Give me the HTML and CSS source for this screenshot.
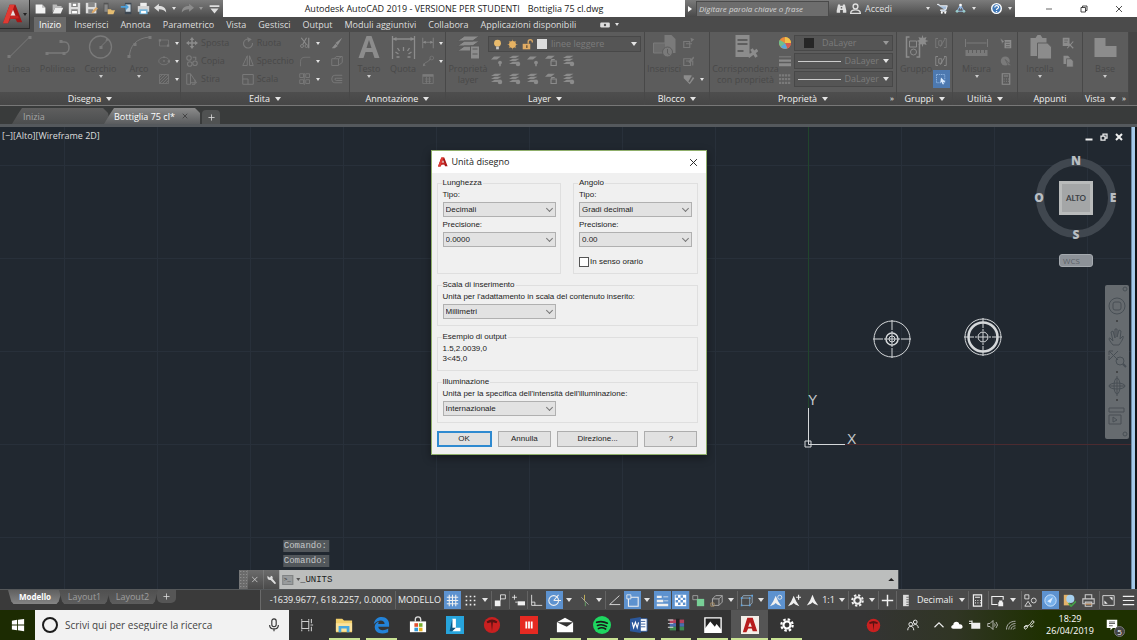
FILE: index.html
```
<!DOCTYPE html>
<html lang="it">
<head>
  <meta charset="UTF-8" />
  <meta name="viewport" content="width=device-width, initial-scale=1.0"/>
  <title>Autodesk AutoCAD 2019</title>
  <link rel="stylesheet" href="styles.css">
</head>
<body>
  <svg class="sprite" aria-hidden="true">
    <!-- quick access -->
    <symbol id="new" viewBox="0 0 16 16"><path d="M2 3h8l4 4v7H2z" fill="#f4f4f4"/><path d="M10 3v4h4" fill="#bbb"/></symbol>
    <symbol id="open" viewBox="0 0 16 16"><path d="M2 13V3h5l1 2h5v2H5z" fill="#bbb"/><path d="M5 7h10l-3 7H2z" fill="#eee"/></symbol>
    <symbol id="save" viewBox="0 0 16 16"><path d="M1 1h14v14H1z" fill="#ddd"/><path d="M4 1h8v5H4zM4 9h8v6H4z" fill="#888"/><path d="M6 2h4v3H6zM5 11h6v3H5z" fill="#fff"/></symbol>
    <symbol id="saveas" viewBox="0 0 16 16"><path d="M1 1h13v13H1z" fill="#ddd"/><path d="M4 1h8v5H4zM4 9h6v5H4z" fill="#888"/><path d="M8 14l1-3 5-5 2 2-5 5z" fill="#dca866"/></symbol>
    <symbol id="openmob" viewBox="0 0 16 16"><path d="M2 1h6v13H2z" fill="#555"/><path d="M3 3h4v9H3z" fill="#888"/><path d="M7 9h4l1 1h4l-2 5H7z" fill="#e5bd72"/></symbol>
    <symbol id="savemob" viewBox="0 0 16 16"><path d="M6 1h8v14H6z" fill="#3c4650"/><path d="M7 3h6v9H7z" fill="#c8d6e0"/><path d="M1 5h6V2l4 4-4 4V7H1z" fill="#4ba0dc"/></symbol>
    <symbol id="print" viewBox="0 0 16 16"><path d="M4 1h8v5H4z" fill="#eee"/><path d="M1 5h14v7H1z" fill="#d5d5d5"/><path d="M3 9h10v6H3z" fill="#70b4dc"/><path d="M5 11h6v3H5z" fill="#fff"/></symbol>
    <symbol id="undo" viewBox="0 0 16 16"><path d="M0 7l6-5v3c5 0 9 2 9 8-2-3-5-4-9-4v3z" fill="currentColor"/></symbol>
    <symbol id="redo" viewBox="0 0 16 16"><path d="M16 7l-6-5v3c-5 0-9 2-9 8 2-3 5-4 9-4v3z" fill="currentColor"/></symbol>
    <symbol id="custom" viewBox="0 0 16 16"><path d="M2 4h12v2H2zM3 8h10l-5 6z" fill="currentColor"/></symbol>
    <symbol id="binoc" viewBox="0 0 16 16"><path d="M3 2h3v2h4V2h3l2 9v3h-5v-4H6v4H1v-3z" fill="currentColor"/><path d="M7 6h2v2H7z" fill="#555"/></symbol>
    <symbol id="user" viewBox="0 0 16 16"><g fill="none" stroke="currentColor" stroke-width="2"><circle cx="8" cy="5" r="3.5"/><path d="M1 15c0-4 3-5 7-5s7 1 7 5z"/></g></symbol>
    <symbol id="cart" viewBox="0 0 16 16"><path d="M0 2h3l1 2h11l-2 6H5l1 2h8" fill="#a8c0dc" stroke="#fff" stroke-width="1.2"/><circle cx="7" cy="14" r="1.5" fill="#fff"/><circle cx="12" cy="14" r="1.5" fill="#fff"/></symbol>
    <symbol id="a360" viewBox="0 0 16 16"><path d="M8 3L3 12h10zM8 3v6" fill="none" stroke="#8fb4e0" stroke-width="1.5"/><circle cx="8" cy="3" r="2" fill="#fff"/><circle cx="3" cy="12" r="2" fill="#9cc"/><circle cx="13" cy="12" r="2" fill="#9cc"/></symbol>
    <symbol id="help" viewBox="0 0 16 16"><circle cx="8" cy="8" r="7" fill="#3f78b8" stroke="#fff" stroke-width="2"/><path d="M5.500 6.500C5.500 3 11 3 11 6c0 2-3 2-3 4M8 11.500V13" fill="none" stroke="#fff" stroke-width="1.800"/></symbol>
    <symbol id="min" viewBox="0 0 16 16"><path d="M2 8h12" stroke="currentColor" stroke-width="1.500"/></symbol>
    <symbol id="restore" viewBox="0 0 16 16"><path d="M2 5h9v9H2zM5 5V2h9v9h-3" fill="none" stroke="currentColor" stroke-width="1.800"/></symbol>
    <symbol id="close" viewBox="0 0 16 16"><path d="M2 2l12 12M14 2L2 14" stroke="currentColor" stroke-width="1.700"/></symbol>
    <symbol id="vmin" viewBox="0 0 16 16"><path d="M1 11h14v4H1z" fill="currentColor"/></symbol>
    <symbol id="vrestore" viewBox="0 0 16 16"><path d="M2 6h8v8H2zM6 6V2h8v8h-4" fill="none" stroke="currentColor" stroke-width="2.500"/></symbol>
    <symbol id="vclose" viewBox="0 0 16 16"><path d="M2 2l12 12M14 2L2 14" stroke="currentColor" stroke-width="4"/></symbol>
    <symbol id="cloudapp" viewBox="0 0 16 10"><rect x="0" y="1" width="16" height="8" rx="2" fill="currentColor"/><circle cx="8" cy="5" r="2" fill="#4f4f4f"/></symbol>

    <!-- ribbon, large -->
    <symbol id="line" viewBox="0 0 24 24"><path d="M2 22L22 2" stroke="currentColor"/><path d="M0 20h3v3H0zM21 1h3v3h-3z" fill="currentColor"/></symbol>
    <symbol id="pline" viewBox="0 0 24 24"><path d="M1 18h18c6 0 6-11 0-11h-3" fill="none" stroke="currentColor" stroke-width="1.500"/><path d="M0 17h3v3H0zM14 5h3v3h-3zM17 17h3v3h-3z" fill="currentColor"/></symbol>
    <symbol id="circle" viewBox="0 0 24 24"><circle cx="12" cy="12" r="11" fill="none" stroke="currentColor" stroke-width="1.300"/><path d="M12 12l7-7" stroke="currentColor"/><path d="M11 11h3v3h-3zM17 6l1-3 3 2z" fill="currentColor"/></symbol>
    <symbol id="arc" viewBox="0 0 24 24"><path d="M2 22C2 11 9 3 22 2" fill="none" stroke="currentColor"/><path d="M0 20h3v3H0zM6 8h3v3H6zM21 1h3v3h-3z" fill="currentColor"/></symbol>
    <symbol id="text" viewBox="0 0 24 24"><path d="M9 1h5l8 22h-5l-2-6H8l-2 6H1zM9 13h5l-2.500-8z" fill="currentColor"/></symbol>
    <symbol id="dim" viewBox="0 0 24 24"><path d="M1 1v23M23 1v23M2 4h20M12 16v-4M7 19l-3-2M17 19l3-2M8 16l-2-3M16 16l2-3M8 22H5M16 22h3" fill="none" stroke="currentColor" stroke-width="1.300"/><path d="M1 4l4-2v4zM23 4l-4-2v4z" fill="currentColor"/></symbol>
    <symbol id="layers" viewBox="0 0 24 24"><path d="M8 1h15l-7 5H1zM8 6h15l-7 5H1zM8 11h10l-2 5H1z" fill="currentColor" stroke="#5a5a5a"/><path d="M14 11h9v13h-9z" fill="currentColor" stroke="#5a5a5a"/><path d="M16 14h5M16 19h5" stroke="#5a5a5a"/></symbol>
    <symbol id="insert" viewBox="0 0 24 24"><path d="M12 0h7l4 4v14H12z" fill="currentColor"/><path d="M1 8h12v10H1z" fill="#6c6c6c" stroke="currentColor"/><circle cx="15" cy="17" r="5" fill="currentColor" stroke="#5e5e5e"/><path d="M15 14v4l2 2" fill="none" stroke="#5e5e5e"/></symbol>
    <symbol id="match" viewBox="0 0 24 24"><path d="M2 0h14v22H2z" fill="currentColor"/><path d="M4 5h10M4 9h10M4 16h6" stroke="#5e5e5e" stroke-width="2"/><path d="M12 16l4 5 8-6M18 14l5 8" fill="none" stroke="currentColor" stroke-width="3"/></symbol>
    <symbol id="group" viewBox="0 0 24 24"><path d="M5 2H2v20h3M15 5v17h-3" fill="none" stroke="currentColor" stroke-width="1.500"/><path d="M5 6h7v6H5z" fill="none" stroke="currentColor"/><circle cx="9" cy="17" r="3" fill="none" stroke="currentColor"/><path d="M18 0l1 3 3-1-1 3 3 1-3 1 1 3-3-1-1 3-1-3-3 1 1-3-3-1 3-1-1-3 3 1z" fill="currentColor"/></symbol>
    <symbol id="measure" viewBox="0 0 24 24"><path d="M1 15h22v6H1z" fill="currentColor"/><path d="M1 4v8M23 4v8M2 8h20" stroke="currentColor"/><path d="M4 15v3M8 15v3M12 15v3M16 15v3M20 15v3" stroke="#5e5e5e"/></symbol>
    <symbol id="paste" viewBox="0 0 24 24"><path d="M2 3h5l2-3h3l2 3h4v18H2z" fill="currentColor"/><path d="M9 8h10l4 4v12H9z" fill="currentColor" stroke="#5e5e5e"/></symbol>
    <symbol id="base" viewBox="0 0 24 24"><path d="M1 3h11v8h11v11H1z" fill="currentColor"/></symbol>

    <!-- ribbon, small -->
    <symbol id="rect" viewBox="0 0 16 16"><path d="M2 4h12v8H2z" fill="none" stroke="currentColor"/><path d="M1 3h3v3H1zM12 10h3v3h-3z" fill="currentColor"/></symbol>
    <symbol id="ellipse" viewBox="0 0 16 16"><ellipse cx="8" cy="8" rx="7" ry="5" fill="none" stroke="currentColor"/><path d="M7 7h2v2H7zM13 7h3v3h-3zM7 2h2v2H7z" fill="currentColor"/></symbol>
    <symbol id="hatch" viewBox="0 0 16 16"><path d="M2 2h12v12H2zM2 6l4-4M2 10l8-8M2 14L14 2M6 14l8-8M10 14l4-4" fill="none" stroke="currentColor"/></symbol>
    <symbol id="move" viewBox="0 0 16 16"><path d="M8 0l3 4H9v3h3V5l4 3-4 3V9H9v3h2l-3 4-3-4h2V9H4v2L0 8l4-3v2h3V4H5z" fill="currentColor"/></symbol>
    <symbol id="rotate" viewBox="0 0 16 16"><path d="M10 3a6 6 0 1 0 4 5" fill="none" stroke="currentColor" stroke-width="1.500"/><path d="M7 0l6 3-5 4z" fill="currentColor"/></symbol>
    <symbol id="trim" viewBox="0 0 16 16"><path d="M3 1l7 9M10 1L5 10M13 1v14" fill="none" stroke="currentColor" stroke-width="1.500"/><circle cx="4" cy="12" r="2" fill="none" stroke="currentColor"/><circle cx="10" cy="12" r="2" fill="none" stroke="currentColor"/></symbol>
    <symbol id="erase" viewBox="0 0 16 16"><path d="M15 1L6 8l3 3zM6 9l3 3-4 3H1z" fill="currentColor"/></symbol>
    <symbol id="copy" viewBox="0 0 16 16"><g fill="none" stroke="currentColor" stroke-width="1.500"><circle cx="4" cy="4" r="3"/><circle cx="5" cy="12" r="3"/><circle cx="12" cy="11" r="3"/><path d="M9 3h4v4"/></g></symbol>
    <symbol id="mirror" viewBox="0 0 16 16"><path d="M7 1v13H1zM10 1v13h5z" fill="none" stroke="currentColor" stroke-width="1.200"/></symbol>
    <symbol id="fillet" viewBox="0 0 16 16"><path d="M2 15V9q0-6 6-6h7" fill="none" stroke="currentColor"/></symbol>
    <symbol id="explode" viewBox="0 0 16 16"><path d="M1 5h9v9H1zM4 5l3-3h8v8l-4 3M10 5l4-3" fill="none" stroke="currentColor" stroke-width="1.200"/></symbol>
    <symbol id="stretch" viewBox="0 0 16 16"><path d="M1 1h5v14H1zM6 1l8 12H6M12 9v6H8" fill="none" stroke="currentColor" stroke-width="1.300"/></symbol>
    <symbol id="scale" viewBox="0 0 16 16"><path d="M1 2h14v13H1zM1 8h7v7" fill="none" stroke="currentColor" stroke-width="1.300"/></symbol>
    <symbol id="array" viewBox="0 0 16 16"><path d="M1 1h5v5H1zM9 1h5v5H9zM1 9h5v5H1zM9 9h5v5H9zM7 0v16" fill="none" stroke="currentColor" stroke-width="1.200"/></symbol>
    <symbol id="offset" viewBox="0 0 16 16"><path d="M15 3H5q-4 0-4 5t4 5h10M15 7H7q-2 0-2 1t2 2h8" fill="none" stroke="currentColor" stroke-width="1.200"/></symbol>
    <symbol id="linear" viewBox="0 0 16 16"><path d="M1 1v14M15 1v14M2 7h12" stroke="currentColor"/><path d="M1 7l4-2v4zM15 7l-4-2v4z" fill="currentColor"/></symbol>
    <symbol id="leader" viewBox="0 0 16 16"><path d="M2 14C4 8 8 11 11 5" fill="none" stroke="currentColor" stroke-width="1.300"/><circle cx="13" cy="4" r="2.500" fill="none" stroke="currentColor"/><path d="M1 15l1-4 3 3z" fill="currentColor"/></symbol>
    <symbol id="table" viewBox="0 0 16 16"><path d="M1 2h14v12H1z" fill="none" stroke="currentColor"/><path d="M1 2h14v3H1z" fill="currentColor"/><path d="M4 8h8M4 11h8M6 5v9M10 5v9" stroke="currentColor"/></symbol>
    <symbol id="lay1" viewBox="0 0 16 16"><path d="M4 2h9L8 6H0z" fill="currentColor"/><circle cx="12" cy="10" r="2.500" fill="currentColor"/><path d="M11 11h2v4h-2z" fill="currentColor"/></symbol>
    <symbol id="lay2" viewBox="0 0 16 16"><path d="M5 1h9l-5 3H0zM5 5h9l-5 3H0zM5 9h9l-5 3H0z" fill="currentColor"/><circle cx="12" cy="12" r="3" fill="currentColor"/></symbol>
    <symbol id="lay3" viewBox="0 0 16 16"><path d="M4 1h9L8 5H0z" fill="currentColor"/><path d="M8 8h7v6H8zM9 8V6h4" fill="none" stroke="currentColor" stroke-width="1.500"/></symbol>
    <symbol id="bulb" viewBox="0 0 16 16"><circle cx="8" cy="6" r="5" fill="#e9bb6c"/><path d="M6 11h4v4H6z" fill="#c8c8c8"/></symbol>
    <symbol id="sun" viewBox="0 0 16 16"><path d="M8 1v14M1 8h14M3 3l10 10M13 3L3 13" stroke="#a8875a" stroke-width="1.500"/><circle cx="8" cy="8" r="5" fill="#e6b262"/></symbol>
    <symbol id="unlock" viewBox="0 0 16 16"><path d="M9 7V4q0-3 3-3t3 3v1" fill="none" stroke="#d9a763" stroke-width="2"/><path d="M1 7h11v8H1z" fill="#e2ac64"/><path d="M6 9h2v4H6z" fill="#6b563a"/></symbol>
    <symbol id="blk1" viewBox="0 0 16 16"><path d="M1 6h8v8H1zM4 9h8" fill="none" stroke="currentColor" stroke-width="1.500"/><path d="M10 1l5 2-4 4z" fill="currentColor"/></symbol>
    <symbol id="blk2" viewBox="0 0 16 16"><path d="M1 5h9v9H1zM4 8h9v6" fill="none" stroke="currentColor" stroke-width="1.500"/><path d="M7 9l7-7 1 2-6 7z" fill="currentColor"/></symbol>
    <symbol id="blk3" viewBox="0 0 16 16"><path d="M1 3h10l4 4-6 8-8-8z" fill="currentColor"/><path d="M8 12l6-10" stroke="#5e5e5e" stroke-width="2"/></symbol>
    <symbol id="wheel" viewBox="0 0 16 16"><circle cx="8" cy="8" r="8" fill="#e88b3c"/><path d="M8 8V0a8 8 0 0 1 8 8z" fill="#f0c24a"/><path d="M8 8h8a8 8 0 0 1-5 7z" fill="#d65a50"/><path d="M8 8l3 7a8 8 0 0 1-9-2z" fill="#58a8dc"/><path d="M8 8l-6 5a8 8 0 0 1-1-9z" fill="#70bf8c"/></symbol>
    <symbol id="lwt" viewBox="0 0 16 16"><path d="M0 2h16v1H0zM0 6h16v3H0zM0 11h16v4H0z" fill="currentColor"/></symbol>
    <symbol id="ltype" viewBox="0 0 16 16"><path d="M0 3h16M0 8h16M0 13h16" stroke="currentColor" stroke-width="3" stroke-dasharray="3 1"/></symbol>
    <symbol id="ungroup" viewBox="0 0 16 16"><path d="M4 2H1v12h3M12 2h3v12h-3M5 5h4v6H5zM13 3l-6 10" fill="none" stroke="currentColor" stroke-width="1.200"/></symbol>
    <symbol id="grpsel" viewBox="0 0 16 16"><path d="M2 2h11v11H2z" fill="none" stroke="#9cc2ec" stroke-dasharray="2 1"/><path d="M8 6l6 6-3 0 1 3-2 0-1-3-2 1z" fill="#dcecff"/></symbol>
    <symbol id="qsel" viewBox="0 0 16 16"><path d="M6 4h9v11H6z" fill="currentColor"/><path d="M0 1l7 6-3 0-1 3z" fill="currentColor" stroke="#5e5e5e"/><path d="M8 7h5M8 10h5M8 13h5" stroke="#5e5e5e"/></symbol>
    <symbol id="pick" viewBox="0 0 16 16"><circle cx="7" cy="8" r="6" fill="currentColor"/><path d="M7 6l8 8-4 0z" fill="currentColor" stroke="#5e5e5e"/></symbol>
    <symbol id="calc" viewBox="0 0 16 16"><path d="M3 1h10v14H3z" fill="none" stroke="currentColor" stroke-width="1.500"/><path d="M5 4h6M5 8h1M8 8h1M11 8h1M5 11h1M8 11h1M11 11h1" stroke="currentColor" stroke-width="1.500"/></symbol>
    <symbol id="cut" viewBox="0 0 16 16"><path d="M1 1h9v11H1z" fill="currentColor"/><path d="M7 7l8 8M15 6l-8 9" stroke="currentColor" stroke-width="1.500"/><path d="M3 4h5M3 7h4" stroke="#5e5e5e"/></symbol>
    <symbol id="dup" viewBox="0 0 16 16"><path d="M2 1h6l2 2v9H2z" fill="currentColor"/><path d="M6 5h6l3 3v8H6z" fill="currentColor" stroke="#5e5e5e"/></symbol>
    <symbol id="acad" viewBox="0 0 24 24"><path d="M8 1h7l8 21h-6l-2-4H9l-3 5H0z" fill="#a61616"/><path d="M8 1h6L6 23H0z" fill="#e03a33"/><path d="M12 7l3 7H9z" fill="#e9e0df"/><path d="M9 14l9 0 1 3-11 1z" fill="#c62422"/></symbol>

    <!-- status bar -->
    <symbol id="s-grid" viewBox="0 0 16 16"><path d="M4 1v14M8 1v14M12 1v14M1 4h14M1 8h14M1 12h14" stroke="currentColor" stroke-width="1.300"/></symbol>
    <symbol id="s-dots" viewBox="0 0 16 16"><path d="M2 3h13M2 8h13M2 13h13" stroke="currentColor" stroke-width="2" stroke-dasharray="2 3"/></symbol>
    <symbol id="s-infer" viewBox="0 0 16 16"><path d="M1 8h7v7H1z" fill="currentColor"/><path d="M8 8V1h6v5H8" fill="none" stroke="currentColor"/></symbol>
    <symbol id="s-dyn" viewBox="0 0 16 16"><path d="M0 4h6M3 1v6M4 10h3" stroke="currentColor"/><path d="M7 9h9v5H7z" fill="currentColor"/></symbol>
    <symbol id="s-ortho" viewBox="0 0 16 16"><path d="M2 1v13h13M2 10h4v4" fill="none" stroke="currentColor"/></symbol>
    <symbol id="s-polar" viewBox="0 0 16 16"><circle cx="7" cy="8" r="6" fill="none" stroke="currentColor" stroke-width="1.300"/><path d="M7 8h9M7 8l6-7M7 8h4" stroke="currentColor" stroke-width="1.300"/></symbol>
    <symbol id="s-iso" viewBox="0 0 16 16"><path d="M8 1v8" stroke="#d7c35d"/><path d="M8 8l5 5M8 8L4 4" stroke="#aaa"/><path d="M9 10v5" stroke="#69b069"/></symbol>
    <symbol id="s-track" viewBox="0 0 16 16"><path d="M2 13h13M2 13L14 2" stroke="currentColor"/></symbol>
    <symbol id="s-osnap" viewBox="0 0 16 16"><path d="M4 4h11v11H3V4" fill="none" stroke="currentColor" stroke-width="1.300"/><path d="M1 1h5v5H1z" fill="#5d92cf" stroke="currentColor"/></symbol>
    <symbol id="s-lw" viewBox="0 0 16 16"><path d="M1 2h6v3H1zM9 3h6v1H9zM1 7h8v3H1zM10 8h5v1h-5zM1 12h14v3H1z" fill="currentColor"/></symbol>
    <symbol id="s-trans" viewBox="0 0 16 16"><path d="M1 1h14v14H1z" fill="#fff"/><path d="M2 3h12M2 9h12" stroke="#5d92cf" stroke-width="3" stroke-dasharray="3 3"/><path d="M5 6h10M5 12h10" stroke="#5d92cf" stroke-width="3" stroke-dasharray="3 3"/></symbol>
    <symbol id="s-cyc" viewBox="0 0 16 16"><path d="M1 2h6v5H1z" fill="none" stroke="#aaa"/><path d="M6 6h9v9H6z" fill="#78cf96"/></symbol>
    <symbol id="s-3d" viewBox="0 0 16 16"><path d="M3 6h8v8H3zM3 6l4-4h8l-4 4M15 2v8l-4 4" fill="none" stroke="#aaa" stroke-width="1.200"/><path d="M1 11h4v4H1z" fill="none" stroke="#b09468"/></symbol>
    <symbol id="s-ducs" viewBox="0 0 16 16"><path d="M2 5h10v9H2zM4 2h11v9M2 5l2-3M12 14l3-3" fill="none" stroke="#9db4c8"/><path d="M1 4h2v2H1zM1 13h2v2H1zM11 13h2v2h-2zM14 1h2v2h-2zM11 4h2v2h-2z" fill="#5ba4e4"/></symbol>
    <symbol id="s-ann" viewBox="0 0 16 16"><path d="M8 1l3 7 4 6-5-2-2-2-2 2-5 2 4-6z" fill="currentColor"/></symbol>
    <symbol id="s-ann2" viewBox="0 0 16 16"><path d="M7 2l3 7 4 6-5-2-2-2-2 2-5 2 4-6z" fill="currentColor"/><path d="M13 1v6M10 4h6" stroke="currentColor" stroke-width="1.500"/></symbol>
    <symbol id="s-ann3" viewBox="0 0 16 16"><path d="M7 2l3 7 4 6-5-2-2-2-2 2-5 2 4-6z" fill="currentColor"/><circle cx="12" cy="4" r="2.500" fill="none" stroke="currentColor"/></symbol>
    <symbol id="s-gear" viewBox="0 0 16 16"><circle cx="8" cy="8" r="6.500" fill="none" stroke="currentColor" stroke-width="2.500" stroke-dasharray="2.800 2.300"/><circle cx="8" cy="8" r="4" fill="none" stroke="currentColor" stroke-width="2.500"/></symbol>
    <symbol id="s-plus" viewBox="0 0 16 16"><path d="M8 1v14M1 8h14" stroke="currentColor" stroke-width="1.800"/></symbol>
    <symbol id="s-rule" viewBox="0 0 16 16"><path d="M5 1h7v14H5z" fill="#ddd"/><path d="M9 4h3M9 7h3M9 10h3M9 13h3" stroke="#555"/></symbol>
    <symbol id="s-lock" viewBox="0 0 16 16"><path d="M8 13H1V3h14v4" fill="none" stroke="currentColor" stroke-width="1.300"/><path d="M9 10h6v5H9zM10 10V8h4v2" fill="currentColor"/></symbol>
    <symbol id="s-iso2" viewBox="0 0 16 16"><path d="M1 1h5v5H1zM5 9l4 6H1z" fill="none" stroke="currentColor"/><circle cx="12" cy="8" r="3" fill="none" stroke="currentColor"/></symbol>
    <symbol id="s-hw" viewBox="0 0 16 16"><circle cx="8" cy="8" r="7" fill="#77b0ea" stroke="#dcecff"/><path d="M4 9l7-5-3 7z" fill="#dcecff"/></symbol>
    <symbol id="s-tr" viewBox="0 0 16 16"><path d="M1 1h7v13H1z" fill="#e3b36a"/><circle cx="9" cy="6" r="5" fill="#a6d0ee"/><path d="M7 11l3 4 6-6" fill="none" stroke="#43a047" stroke-width="2"/></symbol>
    <symbol id="s-print" viewBox="0 0 16 16"><path d="M4 1h8v5H4zM1 6h14v6H1zM4 10h8v5H4z" fill="none" stroke="#ccc" stroke-width="1.300"/><path d="M4 12h8v1H4z" fill="#d98f4a"/></symbol>
    <symbol id="s-full" viewBox="0 0 16 16"><path d="M1 2h14v12H1z" fill="none" stroke="currentColor"/><path d="M9 4h4v4zM3 8v4h4z" fill="currentColor"/></symbol>
    <symbol id="s-menu" viewBox="0 0 16 16"><path d="M1 3h14M1 8h14M1 13h14" stroke="currentColor" stroke-width="1.500"/></symbol>
    <symbol id="wrench" viewBox="0 0 16 16"><path d="M2 1l3 3 2-1 0-2c3 0 4 3 3 5l5 6c1 2-1 3-2 2L7 8C3 9 1 5 2 1z" fill="currentColor"/></symbol>

    <!-- taskbar -->
    <symbol id="win" viewBox="0 0 16 16"><path d="M1 3l6-1v5.500H1zM8 2l7-1v6.500H8zM1 8.500h6V14l-6-1zM8 8.500h7V15l-7-1z" fill="#fff"/></symbol>
    <symbol id="mic" viewBox="0 0 16 16"><rect x="5.500" y="1" width="5" height="9" rx="2.500" fill="none" stroke="#333" stroke-width="1.300"/><path d="M3 8c0 6 10 6 10 0M8 12v3" fill="none" stroke="#333" stroke-width="1.300"/></symbol>
    <symbol id="taskview" viewBox="0 0 16 16"><path d="M2 4h8v8H2zM2 1v2M10 1v2M2 13v2M10 13v2M13 1v5M13 10v5M12 8h3" fill="none" stroke="#ccc" stroke-width="1.200"/></symbol>
    <symbol id="explorer" viewBox="0 0 20 20"><path d="M1 3h7l2 2h9v13H1z" fill="#f3cf6b"/><path d="M1 8h18v9H1z" fill="#fbe29a"/><path d="M4 18v-7h12v7h-3v-4H7v4z" fill="#49a8df"/></symbol>
    <symbol id="edge" viewBox="0 0 20 20"><path d="M2 9C3 3 7 1 11 1c5 0 8 4 8 8v3H7c0 4 6 5 11 2v4C10 21 3 19 3 12c0-3 2-5 5-6-1 1-1 2-1 3h7c0-6-8-5-12 0z" fill="#2383d8"/></symbol>
    <symbol id="store" viewBox="0 0 20 20"><path d="M7 6V4q0-3 3-3t3 3v2" fill="none" stroke="#ddd" stroke-width="1.500"/><path d="M1 6h18v12H1z" fill="#fff"/><path d="M6 8h4v4H6z" fill="#e05030"/><path d="M11 8h4v4h-4z" fill="#78b030"/><path d="M6 13h4v4H6z" fill="#3098d8"/><path d="M11 13h4v4h-4z" fill="#e8b020"/></symbol>
    <symbol id="ell" viewBox="0 0 20 20"><path d="M0 0h20v20H0z" fill="#27a4dc"/><path d="M7 3h4v10h5v4H7z" fill="#fff"/><path d="M7 3L4 17h3l4-4H7z" fill="#0c5580"/></symbol>
    <symbol id="tred" viewBox="0 0 20 20"><circle cx="10" cy="10" r="9" fill="#c92020"/><path d="M4 6q6-4 12 0l-1 2-4-1-1 10-1-10-4 1z" fill="#5a1212"/></symbol>
    <symbol id="mill" viewBox="0 0 20 20"><path d="M0 0h20v20H0z" fill="#e62a22"/><path d="M6 6h2v8H6zM9 6h2v8H9zM12 6h2v8h-2z" fill="#fff"/></symbol>
    <symbol id="mail" viewBox="0 0 20 20"><path d="M1 7l9-5 9 5v11H1z" fill="#fff"/><path d="M1 7l11 5 7-5" fill="#333"/></symbol>
    <symbol id="spotify" viewBox="0 0 20 20"><circle cx="10" cy="10" r="10" fill="#1ed760"/><path d="M4 7q6-2 12 1M5 10.500q5-2 10 1M6 14q4-2 8 .5" fill="none" stroke="#1a1a1a" stroke-width="1.800" stroke-linecap="round"/></symbol>
    <symbol id="word" viewBox="0 0 20 20"><path d="M9 3h10v14H9z" fill="#fff" stroke="#2b579a"/><path d="M12 6h5M12 9h5M12 12h5" stroke="#2b579a"/><path d="M0 3l12-2v18L0 17z" fill="#2b579a"/><path d="M2.500 7l1.500 6 2-6 2 6 1.500-6" fill="none" stroke="#fff" stroke-width="1.300"/></symbol>
    <symbol id="winrar" viewBox="0 0 20 20"><path d="M3 4h16v4H3z" fill="#b3405c"/><path d="M3 8h16v4H3z" fill="#4a6db0"/><path d="M3 12h16v4H3z" fill="#3c8a50"/><path d="M10 3h4v14h-4z" fill="#222"/><path d="M1 4h6v1H1zM1 8h6v1H1zM1 12h6v1H1z" fill="#ddd"/></symbol>
    <symbol id="photos" viewBox="0 0 20 20"><path d="M1 2h18v16H1z" fill="#222" stroke="#fff" stroke-width="1.500"/><path d="M1 18V14l6-8 5 6 2-3 5 6v3z" fill="#fff"/></symbol>
    <symbol id="acadtile" viewBox="0 0 20 20"><path d="M0 0h20v20H0z" fill="#f4eee8"/><path d="M7 2h6l5 15h-5l-1-3H8l-2 4H2zM10 7l-2 5h4z" fill="#b71c1c"/></symbol>
    <symbol id="people" viewBox="0 0 16 16"><g fill="none" stroke="#eee" stroke-width="1.300"><circle cx="5" cy="7" r="2.500"/><circle cx="11" cy="4" r="2.500"/><path d="M1 15c0-7 8-7 8 0M8 9c2-3 7-2 7 3"/></g></symbol>
    <symbol id="up" viewBox="0 0 16 16"><path d="M2 11l6-6 6 6" fill="none" stroke="#eee" stroke-width="1.500"/></symbol>
    <symbol id="cloud" viewBox="0 0 16 16"><path d="M3 13c-4 0-3-5 0-5 0-5 7-6 8-1 5-1 6 6 2 6z" fill="#fff"/></symbol>
    <symbol id="battery" viewBox="0 0 16 16"><path d="M3 5h12v8H3z" fill="#eee"/><path d="M0 3h4M0 6h4M4 2v5" stroke="#eee" stroke-width="1.500"/></symbol>
    <symbol id="speaker" viewBox="0 0 16 16"><path d="M1 6h3l4-4v12l-4-4H1zM10 6q2 2 0 4M12 4q4 4 0 8" fill="none" stroke="#ddd"/></symbol>
    <symbol id="wifi" viewBox="0 0 16 16"><path d="M2 14C2 7 7 3 14 3M5 14c0-4 4-8 9-8M8 14c0-3 3-5 6-5M11 14c0-1 1-2 3-2" fill="none" stroke="#bbb" stroke-width="1.200"/></symbol>
    <symbol id="pen" viewBox="0 0 16 16"><path d="M1 11c3-4 6-2 5 0s-4 4-4 1 6-2 8-6l3-4 2 2-5 5c-1 2 2 2 4 0" fill="none" stroke="#eee" stroke-width="1.300"/></symbol>
    <symbol id="note" viewBox="0 0 16 16"><path d="M1 1h14v11H9l-3 3v-3H1z" fill="#fff"/><path d="M4 4h8M4 6h8M4 9h5" stroke="#333"/></symbol>
  </svg>

  <header class="titlebar">
    <button class="applogo" aria-label="Menu applicazione"><svg><use href="#acad"/></svg><i class="caret"></i></button>
    <div class="qat">
      <button aria-label="Nuovo"><svg><use href="#new"/></svg></button>
      <button aria-label="Apri"><svg><use href="#open"/></svg></button>
      <button aria-label="Salva"><svg><use href="#save"/></svg></button>
      <button aria-label="Salva con nome"><svg><use href="#saveas"/></svg></button>
      <button aria-label="Apri da mobile"><svg><use href="#openmob"/></svg></button>
      <button aria-label="Salva su mobile"><svg><use href="#savemob"/></svg></button>
      <button aria-label="Stampa"><svg><use href="#print"/></svg></button>
      <button aria-label="Annulla"><svg><use href="#undo"/></svg></button>
      <i class="caret"></i>
      <button class="off" aria-label="Ripeti"><svg><use href="#redo"/></svg></button>
      <i class="caret off"></i>
      <button aria-label="Personalizza"><svg><use href="#custom"/></svg></button>
    </div>
    <div class="apptitle"><span>Autodesk AutoCAD 2019 - VERSIONE PER STUDENTI</span><span>Bottiglia 75 cl.dwg</span></div>
    <div class="infocenter">
      <i class="caret right"></i>
      <input type="text" class="keyword" placeholder="Digitare parola chiave o frase" aria-label="Cerca">
      <button aria-label="Cerca"><svg><use href="#binoc"/></svg></button>
      <button class="login"><svg><use href="#user"/></svg>Accedi</button>
      <i class="caret"></i>
      <button aria-label="App Store"><svg><use href="#cart"/></svg></button>
      <button aria-label="Connetti"><svg><use href="#a360"/></svg></button>
      <i class="caret"></i>
      <button class="helpbtn" aria-label="Guida"><svg><use href="#help"/></svg></button>
      <i class="caret"></i>
    </div>
    <div class="winbtns">
      <button aria-label="Riduci"><svg><use href="#min"/></svg></button>
      <button aria-label="Ripristina"><svg><use href="#restore"/></svg></button>
      <button aria-label="Chiudi"><svg><use href="#close"/></svg></button>
    </div>
  </header>

  <nav class="tabs">
    <a href="#" class="active">Inizio</a>
    <a href="#">Inserisci</a>
    <a href="#">Annota</a>
    <a href="#">Parametrico</a>
    <a href="#">Vista</a>
    <a href="#">Gestisci</a>
    <a href="#">Output</a>
    <a href="#">Moduli aggiuntivi</a>
    <a href="#">Collabora</a>
    <a href="#">Applicazioni disponibili</a>
    <button aria-label="Riduci barra multifunzione"><svg><use href="#cloudapp"/></svg><i class="caret"></i></button>
  </nav>

  <section class="ribbon">
    <div class="panel">
      <div class="tools">
        <button class="big"><svg><use href="#line"/></svg>Linea</button>
        <button class="big wide"><svg><use href="#pline"/></svg>Polilinea</button>
        <button class="big wide"><svg><use href="#circle"/></svg>Cerchio<i class="caret"></i></button>
        <button class="big"><svg><use href="#arc"/></svg>Arco<i class="caret"></i></button>
        <div class="stack">
          <button><svg><use href="#rect"/></svg><i class="caret"></i></button>
          <button><svg><use href="#ellipse"/></svg><i class="caret"></i></button>
          <button><svg><use href="#hatch"/></svg><i class="caret"></i></button>
        </div>
      </div>
      <h2>Disegna<i class="caret"></i></h2>
    </div>
    <div class="panel">
      <div class="tools">
        <div class="stack labelled">
          <button><svg class="lit"><use href="#move"/></svg>Sposta</button>
          <button><svg><use href="#copy"/></svg>Copia</button>
          <button><svg><use href="#stretch"/></svg>Stira</button>
        </div>
        <div class="stack labelled">
          <button><svg><use href="#rotate"/></svg>Ruota</button>
          <button><svg><use href="#mirror"/></svg>Specchio</button>
          <button><svg><use href="#scale"/></svg>Scala</button>
        </div>
        <div class="stack">
          <button><svg class="lit"><use href="#trim"/></svg><i class="caret"></i></button>
          <button><svg><use href="#fillet"/></svg><i class="caret"></i></button>
          <button><svg><use href="#array"/></svg><i class="caret"></i></button>
        </div>
        <div class="stack last">
          <button><svg class="lit"><use href="#erase"/></svg></button>
          <button><svg><use href="#explode"/></svg></button>
          <button><svg><use href="#offset"/></svg></button>
        </div>
      </div>
      <h2>Edita<i class="caret"></i></h2>
    </div>
    <div class="panel">
      <div class="tools">
        <button class="big"><svg class="lit"><use href="#text"/></svg>Testo<i class="caret"></i></button>
        <button class="big"><svg class="lit"><use href="#dim"/></svg>Quota</button>
        <div class="stack">
          <button><svg class="lit"><use href="#linear"/></svg><i class="caret"></i></button>
          <button><svg><use href="#leader"/></svg><i class="caret"></i></button>
          <button><svg><use href="#table"/></svg></button>
        </div>
      </div>
      <h2>Annotazione<i class="caret"></i></h2>
    </div>
    <div class="panel">
      <div class="tools">
        <button class="big mid"><svg class="lit"><use href="#layers"/></svg>Proprietà layer</button>
        <div class="layerbox">
          <button class="combo"><svg><use href="#bulb"/></svg><svg><use href="#sun"/></svg><svg><use href="#unlock"/></svg><b class="swatch"></b>linee leggere<i class="caret"></i></button>
          <div class="iconrow">
            <button><svg class="lit"><use href="#lay1"/></svg></button>
            <button><svg class="lit"><use href="#lay2"/></svg></button>
            <button><svg class="lit"><use href="#lay1"/></svg></button>
            <button><svg class="lit"><use href="#lay3"/></svg></button>
            <button><svg class="lit"><use href="#lay2"/></svg></button>
          </div>
          <div class="iconrow">
            <button><svg class="lit"><use href="#lay2"/></svg></button>
            <button><svg class="lit"><use href="#lay2"/></svg></button>
            <button><svg class="lit"><use href="#lay2"/></svg></button>
            <button><svg class="lit"><use href="#lay3"/></svg></button>
            <button><svg class="lit"><use href="#lay2"/></svg></button>
          </div>
        </div>
      </div>
      <h2>Layer<i class="caret"></i></h2>
    </div>
    <div class="panel">
      <div class="tools">
        <button class="big"><svg><use href="#insert"/></svg>Inserisci</button>
        <div class="stack">
          <button><svg><use href="#blk1"/></svg></button>
          <button><svg><use href="#blk2"/></svg></button>
          <button><svg class="lit"><use href="#blk3"/></svg><i class="caret"></i></button>
        </div>
      </div>
      <h2>Blocco<i class="caret"></i></h2>
    </div>
    <div class="panel">
      <div class="tools">
        <button class="big xwide"><svg class="lit"><use href="#match"/></svg>Corrispondenza con proprietà</button>
        <div class="props">
          <div><svg><use href="#wheel"/></svg><button class="combo"><b class="swatch dark"></b>DaLayer<i class="caret off"></i></button></div>
          <div><svg class="lit"><use href="#lwt"/></svg><button class="combo"><b class="rule"></b>DaLayer<i class="caret"></i></button></div>
          <div><svg><use href="#ltype"/></svg><button class="combo"><b class="rule"></b>DaLayer<i class="caret"></i></button></div>
        </div>
      </div>
      <h2 class="more">Proprietà<i class="caret"></i></h2>
    </div>
    <div class="panel">
      <div class="tools">
        <button class="big"><svg class="lit"><use href="#group"/></svg>Gruppo</button>
        <div class="stack">
          <button><svg><use href="#ungroup"/></svg></button>
          <button><svg class="lit"><use href="#ungroup"/></svg></button>
          <button class="on"><svg><use href="#grpsel"/></svg></button>
        </div>
      </div>
      <h2>Gruppi<i class="caret"></i></h2>
    </div>
    <div class="panel">
      <div class="tools">
        <button class="big wide"><svg><use href="#measure"/></svg>Misura<i class="caret"></i></button>
        <div class="stack">
          <button><svg class="lit"><use href="#qsel"/></svg></button>
          <button><svg><use href="#pick"/></svg></button>
          <button><svg class="lit"><use href="#calc"/></svg></button>
        </div>
      </div>
      <h2>Utilità<i class="caret"></i></h2>
    </div>
    <div class="panel">
      <div class="tools">
        <button class="big mid"><svg class="lit"><use href="#paste"/></svg>Incolla<i class="caret"></i></button>
        <div class="stack">
          <button><svg class="lit"><use href="#cut"/></svg></button>
          <button><svg class="lit"><use href="#dup"/></svg></button>
        </div>
      </div>
      <h2>Appunti</h2>
    </div>
    <div class="panel">
      <div class="tools">
        <button class="big mid"><svg class="lit"><use href="#base"/></svg>Base<i class="caret"></i></button>
      </div>
      <h2 class="more narrow">Vista<i class="caret"></i></h2>
    </div>
  </section>

  <nav class="files">
    <a href="#">Inizia</a>
    <a href="#" class="active">Bottiglia 75 cl*<svg><use href="#close"/></svg></a>
    <button aria-label="Nuovo disegno"><svg><use href="#s-plus"/></svg></button>
  </nav>

  <main class="viewport">
    <svg class="drawing" aria-label="Disegno">
      <path d="M808.500 0V317" stroke="#21452c"/>
      <path d="M808 317.500H1131" stroke="#4b2b30"/>
      <g fill="none" stroke="#d5d8da">
        <path d="M808.500 281V317.500H845M805 314h6v6h-6z"/>
        <circle cx="892" cy="212" r="18"/>
        <circle cx="892" cy="212" r="6" stroke-width="1.500"/>
        <circle cx="892" cy="212" r="3"/>
        <path d="M892 193v38M873 212h38" stroke-dasharray="10 1 2 1"/>
        <circle cx="983" cy="210" r="18"/>
        <circle cx="983" cy="210" r="14.500" stroke-width="2.500"/>
        <circle cx="983" cy="210" r="5"/>
        <path d="M983 191v38M964 210h38" stroke-dasharray="10 1 2 1"/>
      </g>
      <text x="808" y="278">Y</text>
      <text x="847" y="317">X</text>
    </svg>
    <div class="vplabel">[−][Alto][Wireframe 2D]</div>
    <div class="vpbtns">
      <button aria-label="Riduci vista"><svg><use href="#vmin"/></svg></button>
      <button aria-label="Ripristina vista"><svg><use href="#vrestore"/></svg></button>
      <button aria-label="Chiudi vista"><svg><use href="#vclose"/></svg></button>
    </div>
    <div class="cube">
      <b>N</b><b>O</b><button>ALTO</button><b>E</b><b>S</b>
    </div>
    <button class="wcs">WCS</button>
    <div class="navbar">
      <svg viewBox="0 0 24 154" fill="none" stroke="#484f55">
        <circle cx="20" cy="4" r="2"/>
        <circle cx="12" cy="21" r="8"/><rect x="8" y="17" width="8" height="8" rx="2"/>
        <path d="M11 36h2M11 87h2M11 115h2" stroke="#222"/>
        <path d="M8 60c-4-5-5-7-3-7l3 3-2-9 2-1 2 7V44h2v8l2-7 2 1-1 8 3-3c1 2-2 6-4 9z"/>
        <path d="M4 66l9 9M4 66v4M4 66h4M13 66l-9 9M4 75v-4"/><circle cx="15" cy="76" r="4"/><path d="M18 79l3 3" stroke-width="2"/>
        <ellipse cx="12" cy="101" rx="8" ry="3"/><ellipse cx="12" cy="101" rx="3" ry="8"/><path d="M12 91v20M4 101h16"/>
        <path d="M4 123h15v4H4zM4 130h12v9H4zM8 132v5l4-2z"/>
        <circle cx="20" cy="149" r="2"/>
      </svg>
    </div>
    <div class="edge"></div>

    <div class="cmd">
      <p>Comando:</p>
      <p>Comando:</p>
      <div class="cmdline">
        <span class="grip"></span>
        <button aria-label="Chiudi"><svg><use href="#close"/></svg></button>
        <button aria-label="Personalizza"><svg><use href="#wrench"/></svg></button>
        <label for="cmdInput">&gt;_</label>
        <i class="caret"></i>
        <input type="text" id="cmdInput" value="_UNITS">
        <i class="caret above"></i>
      </div>
    </div>

    <form class="dialog" role="dialog" aria-labelledby="dlgTitle">
      <div class="dlghead">
        <svg><use href="#acad"/></svg>
        <h1 id="dlgTitle">Unità disegno</h1>
        <button type="button" aria-label="Chiudi"><svg><use href="#close"/></svg></button>
      </div>
      <div class="dlgbody">
        <div class="cols">
          <fieldset>
            <legend>Lunghezza</legend>
            <label for="lenType">Tipo:</label>
            <span class="select"><select id="lenType"><option>Decimali</option></select></span>
            <label for="lenPrec">Precisione:</label>
            <span class="select"><select id="lenPrec"><option>0.0000</option></select></span>
          </fieldset>
          <fieldset>
            <legend>Angolo</legend>
            <label for="angType">Tipo:</label>
            <span class="select"><select id="angType"><option>Gradi decimali</option></select></span>
            <label for="angPrec">Precisione:</label>
            <span class="select"><select id="angPrec"><option>0.00</option></select></span>
            <label class="check"><input type="checkbox">In senso orario</label>
          </fieldset>
        </div>
        <fieldset>
          <legend>Scala di inserimento</legend>
          <label for="insUnit">Unità per l'adattamento in scala del contenuto inserito:</label>
          <span class="select"><select id="insUnit"><option>Millimetri</option></select></span>
        </fieldset>
        <fieldset>
          <legend>Esempio di output</legend>
          <p>1.5,2.0039,0</p>
          <p>3&lt;45,0</p>
        </fieldset>
        <fieldset>
          <legend>Illuminazione</legend>
          <label for="light">Unità per la specifica dell'intensità dell'illuminazione:</label>
          <span class="select"><select id="light"><option>Internazionale</option></select></span>
        </fieldset>
        <div class="buttons">
          <button type="button" class="default">OK</button>
          <button type="button">Annulla</button>
          <button type="button" class="long">Direzione...</button>
          <button type="button">?</button>
        </div>
      </div>
    </form>
  </main>

  <footer class="bottom">
    <nav class="layouts">
      <a href="#" class="active">Modello</a>
      <a href="#">Layout1</a>
      <a href="#">Layout2</a>
      <button aria-label="Nuovo layout"><svg><use href="#s-plus"/></svg></button>
    </nav>
    <div class="status">
      <span class="coords">-1639.9677, 618.2257, 0.0000</span>
      <button class="word">MODELLO</button>
      <button class="on"><svg><use href="#s-grid"/></svg></button>
      <button><svg><use href="#s-dots"/></svg></button><i class="caret"></i>
      <button class="sep"><svg><use href="#s-infer"/></svg></button>
      <button class="sep"><svg><use href="#s-dyn"/></svg></button>
      <button class="sep"><svg><use href="#s-ortho"/></svg></button>
      <button class="on"><svg><use href="#s-polar"/></svg></button><i class="caret"></i>
      <button><svg><use href="#s-iso"/></svg></button><i class="caret"></i>
      <button class="sep"><svg><use href="#s-track"/></svg></button>
      <button class="on"><svg><use href="#s-osnap"/></svg></button><i class="caret"></i>
      <button class="on sep"><svg><use href="#s-lw"/></svg></button>
      <button class="on sep"><svg><use href="#s-trans"/></svg></button>
      <button class="sep"><svg><use href="#s-cyc"/></svg></button>
      <button><svg><use href="#s-3d"/></svg></button><i class="caret"></i>
      <button class="sep"><svg><use href="#s-ducs"/></svg></button><i class="caret"></i>
      <button class="on sep"><svg><use href="#s-ann3"/></svg></button>
      <button><svg><use href="#s-ann2"/></svg></button>
      <button><svg><use href="#s-ann"/></svg></button>
      <button class="ratio">1:1</button><i class="caret"></i>
      <button class="sep"><svg><use href="#s-gear"/></svg></button><i class="caret"></i>
      <button class="sep"><svg><use href="#s-plus"/></svg></button>
      <button class="sep"><svg><use href="#s-rule"/></svg></button>
      <button class="units">Decimali</button><i class="caret"></i>
      <span class="tail">
        <button class="sep"><svg><use href="#calc"/></svg></button>
        <button class="sep"><svg><use href="#s-lock"/></svg></button><i class="caret"></i>
        <button class="sep"><svg><use href="#s-iso2"/></svg></button>
        <button class="on"><svg><use href="#s-hw"/></svg></button>
        <button><svg><use href="#s-tr"/></svg></button>
        <button><svg><use href="#s-print"/></svg></button>
        <button class="sep"><svg><use href="#s-full"/></svg></button>
        <button><svg><use href="#s-menu"/></svg></button>
      </span>
    </div>
  </footer>

  <div class="taskbar">
    <button class="start" aria-label="Start"><svg><use href="#win"/></svg></button>
    <div class="search">
      <i class="ring"></i>
      <input type="text" placeholder="Scrivi qui per eseguire la ricerca" aria-label="Ricerca">
      <svg><use href="#mic"/></svg>
    </div>
    <div class="apps">
      <button><svg><use href="#taskview"/></svg></button>
      <button class="run"><svg><use href="#explorer"/></svg></button>
      <button class="run"><svg><use href="#edge"/></svg></button>
      <button><svg><use href="#store"/></svg></button>
      <button><svg><use href="#ell"/></svg></button>
      <button><svg><use href="#tred"/></svg></button>
      <button><svg><use href="#mill"/></svg></button>
      <button class="run"><svg><use href="#mail"/></svg></button>
      <button class="run"><svg><use href="#spotify"/></svg></button>
      <button class="run"><svg><use href="#word"/></svg></button>
      <button class="run"><svg><use href="#winrar"/></svg></button>
      <button class="run"><svg><use href="#photos"/></svg></button>
      <button class="run current"><svg><use href="#acadtile"/></svg></button>
      <button class="run"><svg><use href="#s-gear"/></svg></button>
    </div>
    <div class="tray">
      <button class="first"><svg><use href="#tred"/></svg></button>
      <button class="second"><svg><use href="#people"/></svg></button>
      <button><svg><use href="#up"/></svg></button>
      <button><svg><use href="#cloud"/></svg></button>
      <button><svg><use href="#battery"/></svg></button>
      <button><svg><use href="#speaker"/></svg></button>
      <button><svg><use href="#wifi"/></svg></button>
      <button><svg><use href="#pen"/></svg></button>
      <div class="clock"><span>18:29</span><span>26/04/2019</span></div>
      <button class="notes"><svg><use href="#note"/></svg><b>5</b></button>
    </div>
  </div>
</body>
</html>
```
FILE: styles.css
```
* {
  box-sizing: border-box;
}
body {
  margin: 0;
  height: 100vh;
  display: flex;
  flex-direction: column;
  overflow: hidden;
  background: #3a3b3b;
  color: #dedede;
  font: 9px/12px "Open Sans", "Noto Sans", sans-serif;
}
button, input, select {
  font: inherit;
  color: inherit;
  background: none;
  border: 0;
  border-radius: 0;
  padding: 0;
  margin: 0;
}
a {
  color: inherit;
  text-decoration: none;
}
h1, h2, p {
  margin: 0;
  font: inherit;
}
button {
  display: flex;
  align-items: center;
  justify-content: center;
}
svg {
  display: block;
  flex: none;
}
.sprite {
  position: absolute;
  width: 0;
  height: 0;
}
.caret {
  flex: none;
  border: 3px solid transparent;
  border-top: 4px solid #e4e4e4;
  border-bottom: 0;
}
.caret.off {
  border-top-color: #999;
}
.caret.right {
  border: 3px solid transparent;
  border-left: 4px solid #fff;
  border-right: 0;
}
.caret.above {
  border: 3px solid transparent;
  border-bottom: 3px solid #222;
  border-top: 0;
}

/* title bar */
.titlebar {
  position: relative;
  flex: none;
  display: flex;
  height: 17px;
  background: #fff;
}
.applogo {
  position: absolute;
  left: 0;
  top: 0;
  z-index: 2;
  width: 30px;
  height: 29px;
  background: linear-gradient(#929292, #4d4d4d);
  border-right: 1px solid #2c2c2c;
  border-bottom: 1px solid #2c2c2c;
}
.applogo svg {
  width: 20px;
  height: 22px;
}
.applogo .caret {
  border-width: 3px 2px 0;
  border-top-color: #222;
}
.qat {
  display: flex;
  align-items: center;
  width: 223px;
  padding-left: 32px;
  background: linear-gradient(#7b7b7b, #4d4d4d);
}
.qat button {
  width: 18px;
  height: 16px;
}
.qat .caret {
  border-width: 3px 2px 0;
  margin: 0 3px;
}
.qat svg {
  width: 13px;
  height: 13px;
}
.qat .off {
  color: #8c8c8c;
}
.apptitle {
  flex: 1;
  display: flex;
  justify-content: center;
  gap: 8px;
  color: #222;
  line-height: 17px;
  white-space: nowrap;
}
.infocenter {
  display: flex;
  align-items: center;
  width: 330px;
  padding-left: 3px;
  background: linear-gradient(#7b7b7b, #484848);
}
.keyword {
  width: 133px;
  height: 16px;
  margin: 0 3px 0 4px;
  padding: 0 2px;
  background: #6d6d6d;
  border: 1px solid #4a4a4a;
  font-size: 8px;
  font-style: italic;
}
.keyword::placeholder {
  color: #d5d5d5;
  opacity: 1;
}
.infocenter button {
  height: 16px;
  width: 18px;
}
.infocenter svg {
  width: 11px;
  height: 11px;
}
.infocenter .login {
  flex: 1;
  justify-content: flex-start;
  gap: 4px;
}
.infocenter .helpbtn {
  margin-left: 8px;
}
.infocenter .caret {
  border-width: 3px 2px 0;
  margin: 0 3px;
}
.infocenter .caret.right {
  border-width: 3px 0 3px 4px;
  margin: 0;
}
.winbtns {
  display: flex;
  width: 122px;
  padding: 0 1px 0 16px;
  color: #333;
}
.winbtns button {
  flex: 1;
}
.winbtns svg {
  width: 8px;
  height: 8px;
}

/* ribbon tabs */
.tabs {
  flex: none;
  display: flex;
  align-items: center;
  height: 15px;
  padding-left: 34px;
  background: #4b4b4b;
}
.tabs a {
  padding: 0 6px;
  line-height: 17px;
}
.tabs a.active {
  padding: 0 5px;
  margin-right: 2px;
  background: #6a6a6a;
  color: #fff;
}
.tabs button {
  gap: 5px;
  margin-left: 18px;
}
.tabs button .caret {
  border-width: 3px 2px 0;
}
.tabs button svg {
  width: 10px;
  height: 6px;
}

/* ribbon panels */
.ribbon {
  flex: none;
  display: grid;
  grid-template-columns: 181fr 169fr 96fr 199fr 65fr 187fr 56fr 65fr 65fr 46fr;
  height: 74px;
  padding-right: 8px;
  border-bottom: 1px solid #777;
  background: #454545;
}
.panel {
  min-width: 0;
  display: flex;
  flex-direction: column;
  background: #5c5c5c;
  border-right: 1px solid #484848;
}
.tools {
  flex: 1;
  display: flex;
  padding: 2px 3px 0 2px;
  overflow: hidden;
  color: #7a7a7a;
}
.panel h2 {
  position: relative;
  display: flex;
  align-items: center;
  justify-content: center;
  gap: 5px;
  height: 13px;
  background: linear-gradient(#4e4e4e, #464646);
  color: #f0f0f0;
}
.panel h2.more::after {
  content: "»";
  position: absolute;
  right: 2px;
  top: 0;
  font-size: 8px;
}
.panel h2.narrow {
  padding-right: 10px;
}
.big {
  flex: none;
  flex-direction: column;
  justify-content: flex-start;
  width: 34px;
  height: 58px;
  padding-top: 1px;
  color: #494949;
  line-height: 11px;
}
.big.mid {
  width: 40px;
}
.big.wide {
  width: 43px;
}
.big.xwide {
  width: 67px;
}
.big svg {
  width: 25px;
  height: 24px;
  margin-bottom: 4px;
  color: #7a7a7a;
}
.big .caret {
  border-width: 3px 2px 0;
  margin-top: 1px;
  border-top-color: #ccc;
}
.tools .lit {
  color: #8c8c8c;
}
.stack {
  display: flex;
  flex-direction: column;
}
.stack button {
  height: 18px;
  padding: 0 3px 0 2px;
  gap: 5px;
  justify-content: flex-start;
}
.stack button.on {
  background: #4d79b0;
}
.stack svg {
  width: 12px;
  height: 12px;
}
.stack .caret {
  border-width: 3px 2px 0;
}
.stack.last {
  margin-left: 6px;
}
.labelled {
  flex: 1;
  padding-left: 1px;
  color: #494949;
}
.labelled button {
  gap: 3px;
}
.labelled svg {
  color: #7a7a7a;
}
.combo {
  flex: 1;
  min-width: 0;
  height: 16px;
  gap: 4px;
  padding: 0 3px;
  justify-content: flex-start;
  background: #555;
  border: 1px solid #484848;
  color: #7c7c7c;
  white-space: nowrap;
}
.combo .caret {
  margin-left: auto;
}
.combo svg {
  width: 11px;
  height: 11px;
}
.swatch {
  flex: none;
  width: 10px;
  height: 10px;
  background: #ddd;
}
.swatch.dark {
  margin: 0 4px 0 6px;
  background: #262626;
}
.rule {
  flex: 1;
  height: 1px;
  background: #ccc;
}
.layerbox {
  flex: 1;
  min-width: 0;
}
.layerbox .combo {
  width: 100%;
  margin-top: 2px;
}
.iconrow {
  display: flex;
  height: 18px;
  padding-left: 3px;
  gap: 6px;
}
.iconrow svg {
  width: 12px;
  height: 12px;
}
.props {
  flex: 1;
  min-width: 0;
}
.props > div {
  display: flex;
  align-items: center;
  gap: 3px;
  height: 18px;
}
.props > div > svg {
  width: 12px;
  height: 12px;
}

/* drawing tabs */
.files {
  flex: none;
  display: flex;
  align-items: flex-end;
  height: 21px;
  padding-left: 12px;
  border-bottom: 3px solid #55595d;
  background: #393b3b;
}
.files a {
  width: 98px;
  height: 16px;
  padding-left: 11px;
  line-height: 17px;
  color: #a6a6a6;
  background: linear-gradient(#5e5e5e, #4c4e4f);
  clip-path: polygon(0 100%, 6px 6px, 10px 0, 91px 0, 96px 5px, 100% 100%);
}
.files a.active {
  display: flex;
  align-items: center;
  justify-content: space-between;
  width: 96px;
  margin-left: -6px;
  padding: 0 12px 0 10px;
  color: #fff;
  background: linear-gradient(#8b8b8b, #5a5c5e);
}
.files a svg {
  width: 6px;
  height: 6px;
  color: #2b2b2b;
}
.files button {
  width: 18px;
  height: 14px;
  margin-left: 2px;
  background: #505252;
  border-radius: 4px 4px 0 0;
}
.files button svg {
  width: 7px;
  height: 7px;
}

/* model space */
.viewport {
  position: relative;
  flex: 1;
  overflow: hidden;
  background-color: #212830;
  background-image:
    linear-gradient(90deg, #28303a 1px, transparent 1px),
    linear-gradient(#28303a 1px, transparent 1px);
  background-size: 93px 93px;
  background-position: 64px 38px;
}
.drawing {
  position: absolute;
  width: 100%;
  height: 100%;
}
.drawing text {
  fill: #c4c8cb;
  font: 14px "Liberation Sans", sans-serif;
}
.vplabel {
  position: absolute;
  left: 2px;
  top: 3px;
}
.vpbtns {
  position: absolute;
  right: 13px;
  top: 5px;
  display: flex;
  gap: 5px;
}
.vpbtns button {
  width: 10px;
  height: 10px;
}
.vpbtns svg {
  width: 8px;
  height: 8px;
  color: #eee;
}
.cube {
  position: absolute;
  right: 21px;
  top: 31px;
  width: 80px;
  height: 80px;
  border: 8px solid #40474f;
  border-radius: 50%;
  color: #b9bec2;
  font: bold 12px/12px "Open Sans", sans-serif;
}
.cube button {
  position: absolute;
  left: 15px;
  top: 15px;
  width: 34px;
  height: 34px;
  background: #a4a6a7;
  border: 3px solid #b9bbbb;
  color: #3c4146;
  font: bold 8px/12px Lato, sans-serif;
}
.cube b {
  position: absolute;
  width: 12px;
  text-align: center;
}
.cube b:nth-of-type(1) { left: 26px; top: -11px; }
.cube b:nth-of-type(2) { left: -11px; top: 26px; }
.cube b:nth-of-type(3) { right: -11px; top: 26px; }
.cube b:nth-of-type(4) { left: 26px; bottom: -11px; }
.wcs {
  position: absolute;
  right: 44px;
  top: 127px;
  width: 34px;
  height: 13px;
  padding-left: 3px;
  justify-content: flex-start;
  background: #8d9298;
  border: 1px solid #a5aaaf;
  border-radius: 3px;
  color: #5c6268;
  font-size: 8px;
}
.navbar {
  position: absolute;
  right: 8px;
  top: 158px;
  width: 24px;
  height: 154px;
  background: #666b6f;
  border-radius: 2px;
}
.navbar svg {
  width: 24px;
  height: 154px;
}
.edge {
  position: absolute;
  right: 0;
  top: 0;
  bottom: 0;
  width: 6px;
  background: #a6c9e8;
  border-left: 1px solid #6d8aa4;
  border-right: 2px solid #101418;
}

/* command line */
.cmd {
  position: absolute;
  left: 50%;
  bottom: 0;
  width: 58%;
  transform: translateX(-50%);
  font: 9px/12px "Liberation Mono", monospace;
}
.cmd p {
  width: 46px;
  margin: 0 0 3px 44px;
  padding: 0 1px;
  background: #52575b;
  color: #c5c8c9;
  white-space: nowrap;
}
.cmdline {
  display: flex;
  align-items: center;
  height: 19px;
  padding-right: 4px;
  background: #bcbebd;
  color: #222;
}
.grip {
  align-self: stretch;
  width: 8px;
  background: #6b6b6b radial-gradient(#999 1px, transparent 1px) 0 0 / 3px 3px;
}
.cmdline button {
  align-self: stretch;
  width: 16px;
  background: linear-gradient(#6c6c6c, #4a4a4a);
  color: #ddd;
}
.cmdline button svg {
  width: 10px;
  height: 10px;
}
.cmdline button:first-of-type svg {
  width: 7px;
  height: 7px;
}
.cmdline label {
  margin: 0 3px;
  padding: 0 1px;
  background: #999c9d;
  border: 1px solid #808384;
  font-size: 6px;
  line-height: 8px;
}
.cmdline .caret {
  border-width: 3px 2px 0;
  border-top-color: #555;
}
.cmdline .above {
  border-width: 0 3px 3px;
}
.cmdline input {
  flex: 1;
}

/* Drawing Units dialog */
.dialog {
  position: absolute;
  left: 0;
  right: 0;
  top: 23px;
  width: 276px;
  margin: 0 auto;
  background: #f0f0f0;
  border: 1px solid #8fae6a;
  color: #222;
  font: 8px/10px "Liberation Sans", Arial, sans-serif;
  box-shadow: 0 3px 8px rgba(0,0,0,0.4);
}
.dlghead {
  display: flex;
  align-items: center;
  gap: 4px;
  height: 22px;
  padding: 0 8px 0 6px;
  background: #fff;
  font: 9px/12px "Open Sans", sans-serif;
}
.dlghead > svg {
  width: 10px;
  height: 10px;
}
.dlghead button {
  margin-left: auto;
}
.dlghead button svg {
  width: 9px;
  height: 9px;
}
.dlgbody {
  display: flex;
  flex-direction: column;
  gap: 6px;
  padding: 5px 8px 7px 5px;
}
.cols {
  display: grid;
  grid-template-columns: 1fr 1fr;
  gap: 12px;
}
.dialog fieldset {
  min-width: 0;
  margin: 0;
  padding: 2px 5px 6px;
  border: 1px solid #dfdfdf;
}
.dialog legend {
  padding: 0 1px;
  margin-left: -1px;
}
.dialog fieldset > label {
  display: block;
  white-space: nowrap;
}
.select {
  position: relative;
  display: block;
  width: 113px;
  margin: 2px 0 3px;
}
.select:last-child {
  margin-bottom: 0;
}
.select select {
  display: block;
  width: 100%;
  height: 15px;
  padding: 0 2px;
  appearance: none;
  background: #e2e2e2;
  border: 1px solid #b0b0b0;
}
.select::after {
  content: "";
  position: absolute;
  right: 4px;
  top: 4px;
  width: 4px;
  height: 4px;
  border: solid #777;
  border-width: 0 1px 1px 0;
  transform: rotate(45deg);
}
.dialog .check {
  display: flex;
  align-items: center;
  gap: 1px;
  margin-top: 10px;
}
.check input {
  appearance: none;
  width: 10px;
  height: 10px;
  background: #fff;
  border: 1px solid #555;
}
.buttons {
  display: flex;
  gap: 6px;
  margin-top: 2px;
}
.buttons button {
  flex: 53 1 0;
  height: 16px;
  background: #e1e1e1;
  border: 1px solid #adadad;
}
.buttons .long {
  flex-grow: 82;
}
.buttons .default {
  border: 2px solid #2f8ad0;
}

/* layout tabs and status bar */
.bottom {
  flex: none;
  display: flex;
  height: 21px;
  border-top: 1px solid #55585a;
  background: #3a3a3a;
}
.layouts {
  display: flex;
  align-items: flex-start;
  width: 260px;
  padding-left: 8px;
}
.layouts a {
  width: 51px;
  height: 14px;
  margin-right: -3px;
  line-height: 13px;
  text-align: center;
  color: #9f9f9f;
  background: linear-gradient(#505050, #5d5d5d);
  clip-path: polygon(0 0, 100% 0, 94% 80%, 90% 100%, 10% 100%, 6% 80%);
}
.layouts a.active {
  width: 54px;
  color: #fff;
  font-size: 8px;
  font-weight: bold;
  background: linear-gradient(#606060, #858585);
}
.layouts button {
  width: 19px;
  height: 13px;
  margin-left: 2px;
  background: #565656;
  border-radius: 0 0 5px 5px;
}
.layouts button svg {
  width: 7px;
  height: 7px;
}
.status {
  flex: 1;
  display: flex;
  align-items: center;
  background: #4a4a4a;
  border-left: 1px solid #6a6a6a;
  color: #f0f0f0;
}
.status button {
  flex: none;
  width: 18px;
  height: 18px;
}
.status svg {
  width: 13px;
  height: 13px;
}
.status .caret {
  margin: 0 3px;
}
.status .sep {
  border-left: 1px solid #636363;
}
.status .on {
  background: #5d92cf;
  border-left: 1px solid #4a4a4a;
}
.status .coords {
  width: 134px;
  padding-right: 3px;
  text-align: right;
  white-space: nowrap;
}
.status .word {
  width: 48px;
  border-left: 1px solid #636363;
}
.status .ratio {
  width: 15px;
}
.status .units {
  width: 42px;
}
.tail {
  flex: 1;
  display: flex;
  align-items: center;
  justify-content: space-between;
}

/* taskbar */
.taskbar {
  flex: none;
  display: flex;
  height: 30px;
  background: linear-gradient(90deg, #343434 76%, #303524 84%, #1e3000 92%);
  color: #fff;
}
.start {
  width: 35px;
  background: #1c2b02;
}
.start svg {
  width: 14px;
  height: 14px;
}
.search {
  display: flex;
  align-items: center;
  gap: 7px;
  width: 254px;
  padding: 0 8px 0 7px;
  background: #f2f2f2;
  color: #444;
}
.search input {
  flex: 1;
  font-size: 10px;
}
.search input::placeholder {
  color: #444;
  opacity: 1;
}
.search svg {
  width: 14px;
  height: 14px;
}
.ring {
  width: 16px;
  height: 16px;
  border: 2px solid #1c1c1c;
  border-radius: 50%;
}
.apps {
  display: grid;
  grid-template-columns: repeat(14, 1fr);
  width: 516px;
}
.apps svg {
  width: 18px;
  height: 18px;
}
.apps button:first-child svg, .apps button:last-child svg {
  width: 14px;
  height: 14px;
}
.apps button {
  padding-top: 2px;
  border-bottom: 2px solid transparent;
}
.apps .run {
  margin: 0 3px;
  border-bottom-color: #c9e394;
}
.apps .current {
  margin: 0;
  background: #555;
}
.tray {
  flex: 1;
  display: flex;
  justify-content: flex-end;
}
.tray button {
  width: 18px;
}
.tray svg {
  width: 12px;
  height: 12px;
}
.tray .first {
  margin-right: 22px;
}
.tray .first svg {
  width: 15px;
  height: 15px;
}
.tray .second {
  margin-right: 8px;
}
.clock {
  display: flex;
  flex-direction: column;
  align-items: center;
  width: 64px;
  padding-top: 3px;
}
.notes {
  position: relative;
  margin: 0 16px 0 1px;
}
.notes b {
  position: absolute;
  right: -4px;
  bottom: 3px;
  width: 11px;
  height: 11px;
  border-radius: 50%;
  background: #444;
  border: 1px solid #777;
  font: 8px/9px "Open Sans", sans-serif;
}
```
